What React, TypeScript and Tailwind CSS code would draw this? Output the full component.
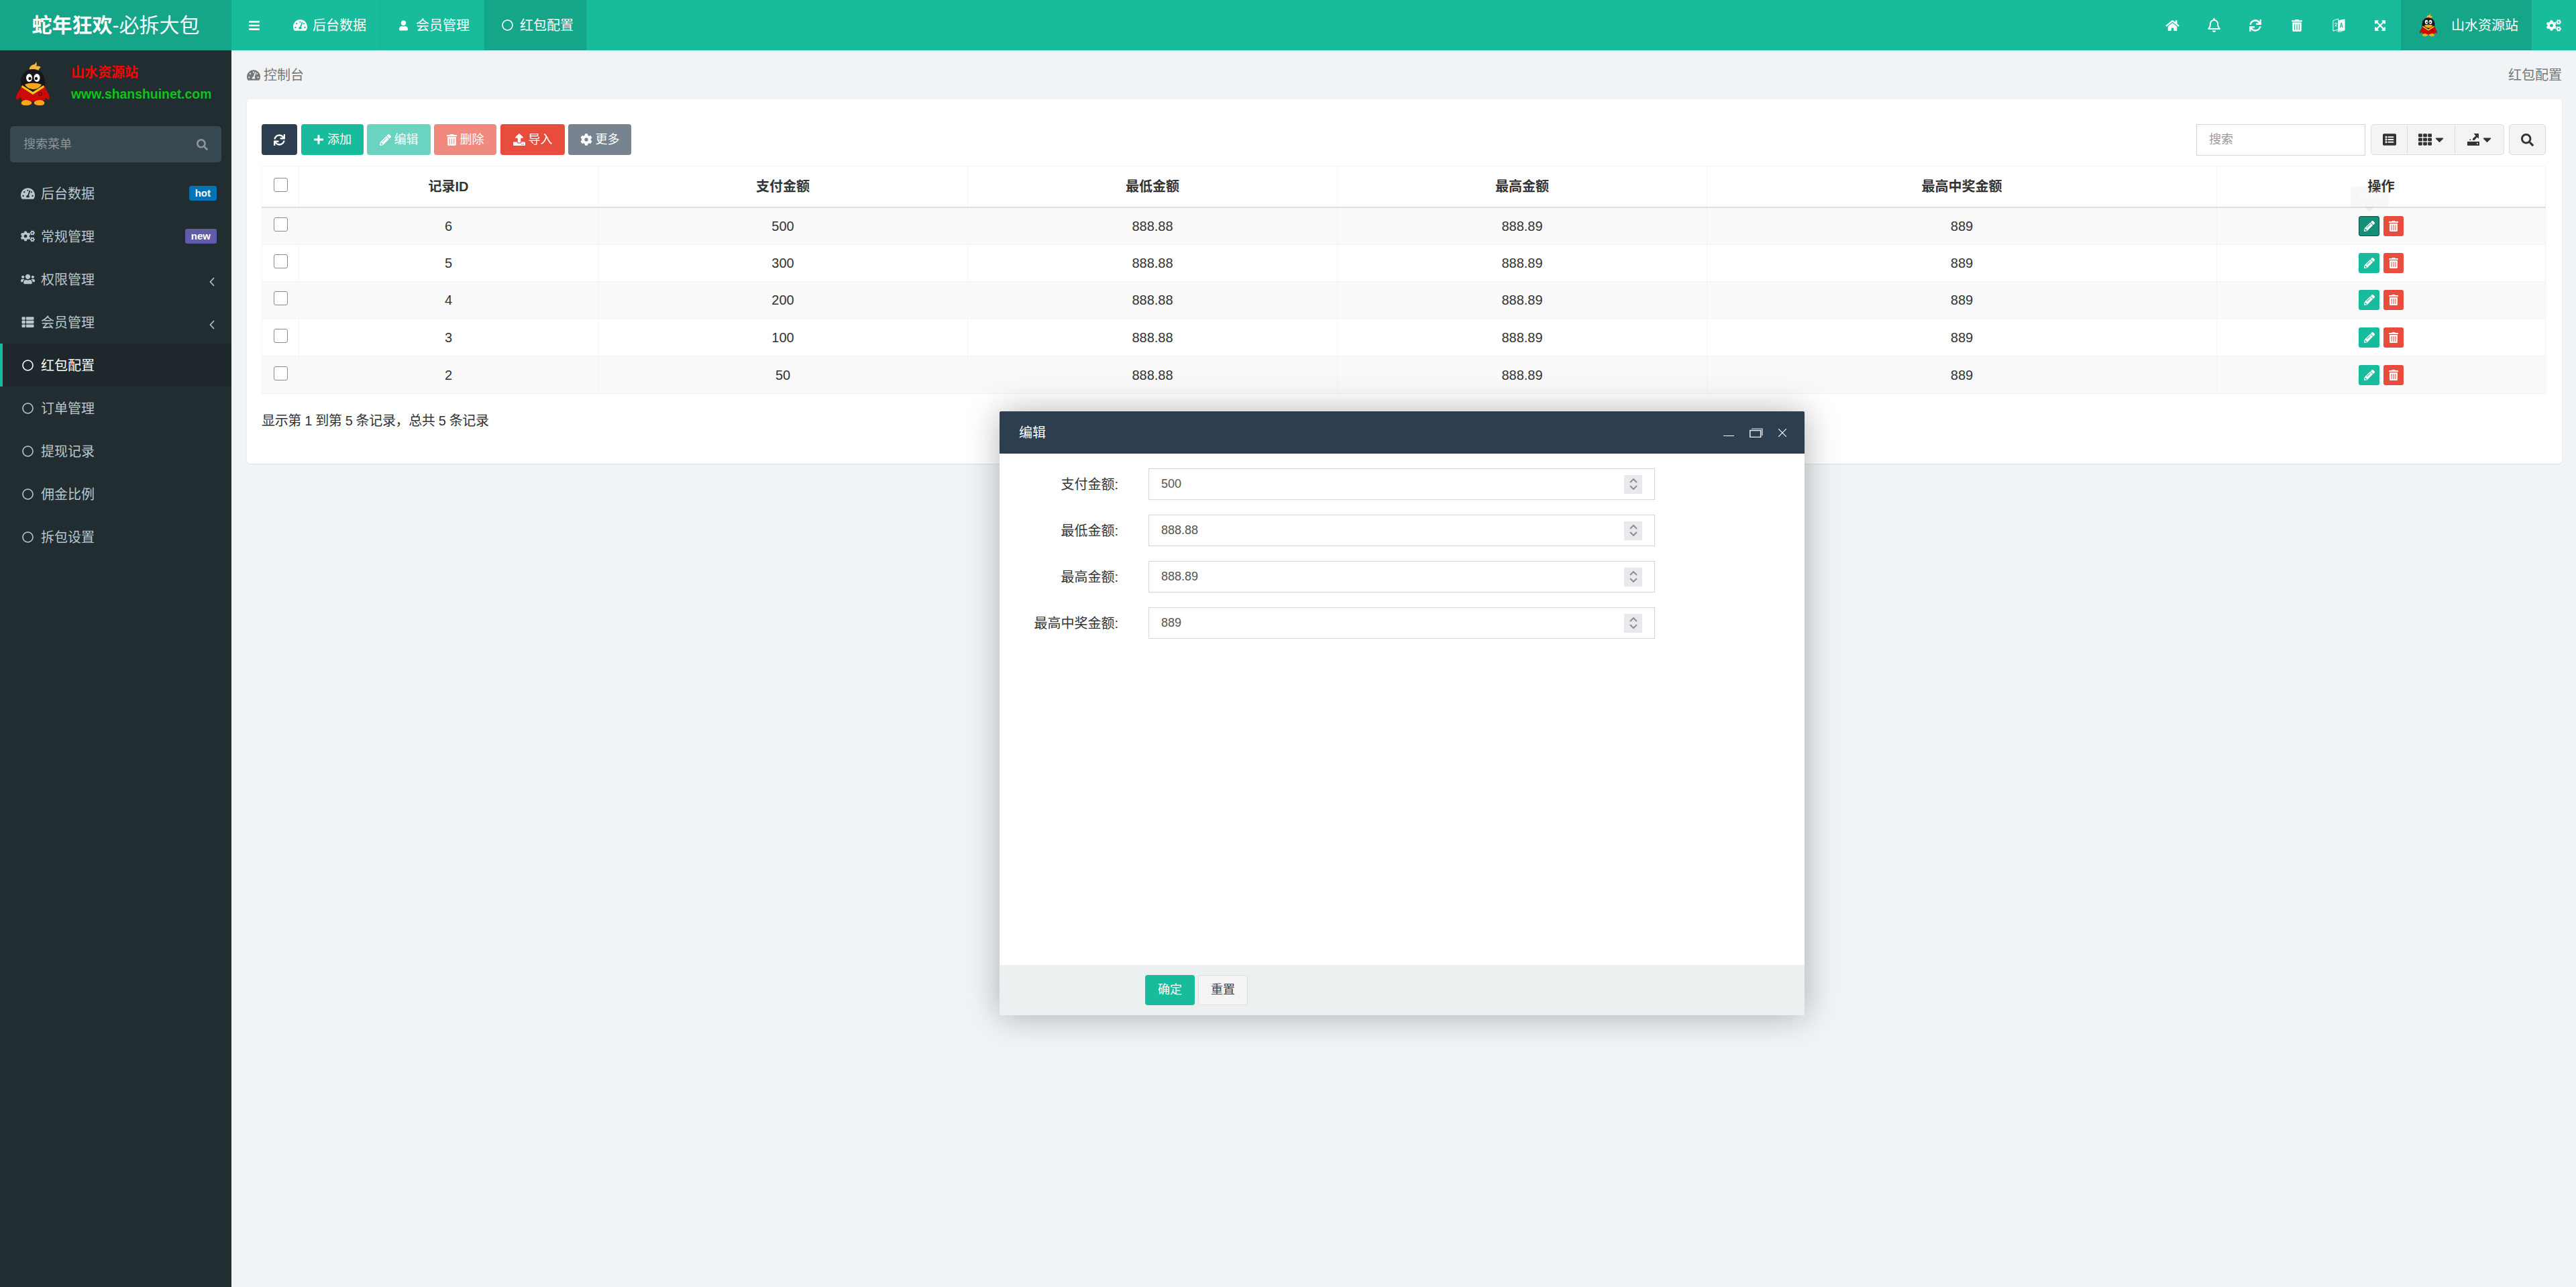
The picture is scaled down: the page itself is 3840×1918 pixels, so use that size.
import type { ReactNode } from 'react';
import {
  FaBars,
  FaCog,
  FaCogs,
  FaHome,
  FaListAlt,
  FaPencilAlt,
  FaPlus,
  FaRegBell,
  FaRegCircle,
  FaSearch,
  FaSync,
  FaTachometerAlt,
  FaTh,
  FaThList,
  FaTrashAlt,
  FaUpload,
  FaUser,
  FaUsers,
  FaExpandArrowsAlt,
  FaCaretDown,
} from 'react-icons/fa';

const rows = [
  { id: 6, pay: 500 },
  { id: 5, pay: 300 },
  { id: 4, pay: 200 },
  { id: 3, pay: 100 },
  { id: 2, pay: 50 },
];

const fields = [
  { label: '支付金额:', value: '500' },
  { label: '最低金额:', value: '888.88' },
  { label: '最高金额:', value: '888.89' },
  { label: '最高中奖金额:', value: '889' },
];

const menu = [
  { name: '后台数据', icon: <FaTachometerAlt className="w-[21px] h-[19px]" />, badge: 'hot' },
  { name: '常规管理', icon: <FaCogs className="w-[21px] h-[20px]" />, badge: 'new' },
  { name: '权限管理', icon: <FaUsers className="w-[21px] h-[20px]" />, arrow: true },
  { name: '会员管理', icon: <FaThList className="w-[21px] h-[18px]" />, arrow: true },
  { name: '红包配置', icon: <FaRegCircle className="w-[17px] h-[17px] mx-[2px]" />, active: true },
  { name: '订单管理', icon: <FaRegCircle className="w-[17px] h-[17px] mx-[2px]" /> },
  { name: '提现记录', icon: <FaRegCircle className="w-[17px] h-[17px] mx-[2px]" /> },
  { name: '佣金比例', icon: <FaRegCircle className="w-[17px] h-[17px] mx-[2px]" /> },
  { name: '拆包设置', icon: <FaRegCircle className="w-[17px] h-[17px] mx-[2px]" /> },
];

function Penguin({ className }: { className: string }) {
  return (
    <svg viewBox="0 0 50 66" className={className}>
      <path d="M22 16C17 11 21 5 27 4c1 0 2-2 3-4 1 3 1 5 0 7 3-1 5 0 7 1-2 1-3 3-4 6-1 3-7 4-11 2z" fill="#f5b83d" />
      <ellipse cx="25" cy="29" rx="18" ry="18" fill="#17171a" />
      <path d="M7 30h36v14H7z" fill="#17171a" />
      <ellipse cx="19.5" cy="24" rx="4.5" ry="6" fill="#fff" />
      <ellipse cx="31" cy="24" rx="4.5" ry="6" fill="#fff" />
      <circle cx="20.5" cy="25" r="2.2" fill="#111" />
      <circle cx="30" cy="25" r="2.2" fill="#111" />
      <path d="M13 34c6-3 18-3 25 0-3 5-8 7-12 7-5 0-10-2-13-7z" fill="#f6a81c" />
      <path d="M7 36l18 11 18-11 3 12-3 9c-6 3-29 3-35 0l-2-10z" fill="#cc0a06" />
      <path d="M9 35l16 10 16-10 1 3-17 11L8 38z" fill="#f6c21c" />
      <path d="M7 40C3 44 0 50 0 54c0 2 2 3 3 2l5-4zM43 40c4 4 7 10 7 14 0 2-2 3-3 2l-5-4z" fill="#cc0a06" />
      <path d="M8 60c3-4 10-4 15 0 1 3-2 5-9 5-5 0-7-2-6-5zM27 60c5-4 12-4 15 0 1 3-1 5-6 5-7 0-10-2-9-5z" fill="#f6a81c" />
      <circle cx="36" cy="48" r="2.4" fill="none" stroke="#6e0806" strokeWidth="1.2" />
    </svg>
  );
}

function TranslateIcon() {
  return (
    <svg viewBox="0 0 20 22" className="w-[19px] h-[21px]" fill="none" stroke="#fff" strokeWidth="1">
      <path d="M1 4l8-3v17l-8 2z" />
      <path d="M9 4l10-2v17l-10 1z" fill="#fff" />
      <path d="M3 8h4M5 7v1M3.5 13c2-1 3-3 3.5-5M4 10c1 1.500 2 2.500 3 3" strokeWidth="0.9" />
      <path d="M12 15l2-8 2 8M12.800 12.500h2.400" stroke="#18bc9c" strokeWidth="1.200" />
      <path d="M7 20c2 2 6 2 9 0" strokeWidth="0.9" />
    </svg>
  );
}

function ExportIcon() {
  return (
    <svg viewBox="0 0 18 18" className="w-[18px] h-[18px]" fill="#333">
      <path d="M0 12h18v6H0z" />
      <path d="M9.500 0H17v7.500l-2.500-2-4 4.500H8v-2.500l4.500-4z" />
      <path d="M4 8l2 2H3z" />
      <circle cx="15" cy="15" r="1" fill="#f4f4f4" />
    </svg>
  );
}

function ToolbarButton({ className, children }: { className: string; children: ReactNode }) {
  return (
    <button className={`h-[46px] flex items-center justify-center gap-[5px] rounded-[4px] text-white text-[18px] ${className}`}>
      {children}
    </button>
  );
}

function NavItem({ icon, name, className = '' }: { icon: ReactNode; name: string; className?: string }) {
  return (
    <div className={`h-full flex items-center gap-[8px] border-r border-[#17b394] text-white text-[20px] ${className}`}>
      {icon}
      <span>{name}</span>
    </div>
  );
}

function TopIcon({ children }: { children: ReactNode }) {
  return <div className="w-[62px] h-full flex items-center justify-center text-white">{children}</div>;
}

function Sidebar() {
  return (
    <aside className="w-[345px] shrink-0 bg-[#222d32] flex flex-col">
      <div className="h-[113px] flex pl-[24px] pt-[17px]">
        <Penguin className="w-[50px] h-[66px]" />
        <div className="ml-[32px] flex flex-col font-bold text-[20px]">
          <span className="text-[#ff0000] leading-[32px]">山水资源站</span>
          <span className="text-[#0fc21c] leading-[32px] text-[19.4px]">www.shanshuinet.com</span>
        </div>
      </div>
      <div className="mx-[15px] h-[54px] rounded-[5px] bg-[#374850] flex items-center justify-between pl-[20px] pr-[20px] text-[#8e9598] text-[18px]">
        <span>搜索菜单</span>
        <FaSearch className="w-[17px] h-[17px]" />
      </div>
      <nav className="mt-[14px] flex flex-col">
        {menu.map((item) => (
          <div
            key={item.name}
            className={`h-[64px] flex items-center text-[20px] border-l-[4px] pl-[27px] pr-[22px] ${
              item.active ? 'bg-[#1e282c] border-[#18bc9c] text-white' : 'border-transparent text-[#b8c7ce]'
            }`}
          >
            {item.icon}
            <span className="ml-[9px] relative top-[1px]">{item.name}</span>
            {item.badge && (
              <span
                className={`ml-auto h-[22px] px-[9px] rounded-[3px] flex items-center text-white text-[15px] font-bold ${
                  item.badge === 'hot' ? 'bg-[#0073b7]' : 'bg-[#605ca8]'
                }`}
              >
                {item.badge}
              </span>
            )}
            {item.arrow && (
              <svg viewBox="0 0 8 14" className="ml-auto mt-[8px] mr-[3px] w-[8px] h-[14px]" fill="none" stroke="#b8c7ce" strokeWidth="1.6">
                <path d="M7 1L1.500 7 7 13" />
              </svg>
            )}
          </div>
        ))}
      </nav>
    </aside>
  );
}

function DataTable() {
  const widths = [
    { id: 'check', w: 'w-[55px]' },
    { id: 'record', w: 'w-[446px]' },
    { id: 'pay', w: 'w-[551px]' },
    { id: 'low', w: 'w-[551px]' },
    { id: 'high', w: 'w-[551px]' },
    { id: 'prize', w: 'w-[760px]' },
    { id: 'ops', w: 'w-[490px]' },
  ];
  const heads = ['记录ID', '支付金额', '最低金额', '最高金额', '最高中奖金额', '操作'];
  return (
    <table className="w-[3404px] table-fixed border-collapse text-[20px] text-[#333]">
      <colgroup>
        {widths.map((c) => (
          <col key={c.id} className={c.w} />
        ))}
      </colgroup>
      <thead>
        <tr className="h-[61px] border border-[#f4f4f4] border-b-2 border-b-[#ddd]">
          <th className="border-r border-[#f4f4f4] text-center">
            <input type="checkbox" className="appearance-none block mx-auto mb-[5px] w-[21px] h-[21px] border border-[#8a8a8f] rounded-[3px] bg-white" />
          </th>
          {heads.map((h) => (
            <th key={h} className="border-r border-[#f4f4f4] text-center font-bold">
              {h}
            </th>
          ))}
        </tr>
      </thead>
      <tbody>
        {rows.map((r, i) => (
          <tr key={r.id} className={`h-[55.6px] border border-[#f4f4f4] ${i % 2 === 0 ? 'bg-[#f9f9f9]' : 'bg-white'}`}>
            <td className="border-r border-[#f4f4f4]">
              <input type="checkbox" className="appearance-none block mx-auto mb-[5px] w-[21px] h-[21px] border border-[#8a8a8f] rounded-[3px] bg-white" />
            </td>
            <td className="border-r border-[#f4f4f4] text-center">{r.id}</td>
            <td className="border-r border-[#f4f4f4] text-center">{r.pay}</td>
            <td className="border-r border-[#f4f4f4] text-center">888.88</td>
            <td className="border-r border-[#f4f4f4] text-center">888.89</td>
            <td className="border-r border-[#f4f4f4] text-center">889</td>
            <td className="border-r border-[#f4f4f4]">
              <div className="flex justify-center gap-[6px]">
                <span
                  className={`relative w-[31px] h-[30px] rounded-[3px] flex items-center justify-center text-white ${
                    i === 0 ? 'bg-[#128f76] border border-[#0a5445]' : 'bg-[#18bc9c]'
                  }`}
                >
                  <FaPencilAlt className="w-[16px] h-[16px]" />
                  {i === 0 && (
                    <span className="absolute left-[-13px] top-[-45px] w-[57px] h-[30px] rounded-[4px] bg-[#000]/[0.03] flex items-center justify-center text-[18px] text-white/50">
                      编辑
                    </span>
                  )}
                  {i === 0 && (
                    <span className="absolute left-[8px] top-[-15px] border-x-[7px] border-x-transparent border-t-[8px] border-t-[#000]/[0.04]" />
                  )}
                </span>
                <span className="w-[30px] h-[30px] rounded-[3px] bg-[#e74c3c] flex items-center justify-center text-white">
                  <FaTrashAlt className="w-[14px] h-[16px]" />
                </span>
              </div>
            </td>
          </tr>
        ))}
      </tbody>
    </table>
  );
}

function EditModal() {
  return (
    <div className="absolute left-[1490px] top-[613px] w-[1200px] h-[900px] flex flex-col bg-white rounded-t-[2px] shadow-[1px_1px_50px_rgba(0,0,0,0.3)]">
      <div className="h-[63px] shrink-0 bg-[#2c3e50] rounded-t-[2px] flex items-center pl-[29px] pr-[27px] text-white text-[20px]">
        <span>编辑</span>
        <div className="ml-auto flex items-center gap-[23px]">
          <svg viewBox="0 0 16 16" className="w-[16px] h-[16px]" fill="none" stroke="#fff">
            <path d="M0 12.500h16" />
          </svg>
          <svg viewBox="0 0 20 14" className="w-[20px] h-[14px]" fill="none" stroke="#e8ebee" strokeWidth="1.200">
            <path d="M.700 3.500h16v10h-16z" strokeWidth="1.600" />
            <path d="M3 1h16v10" />
          </svg>
          <svg viewBox="0 0 12 12" className="w-[12px] h-[12px]" fill="none" stroke="#fff" strokeWidth="1.100">
            <path d="M0 0l12 12M12 0L0 12" />
          </svg>
        </div>
      </div>
      <div className="flex-1 pt-[22px] flex flex-col gap-[22px]">
        {fields.map((f) => (
          <div key={f.label} className="flex items-center">
            <label className="w-[177px] text-right text-[20px] text-[#333]">{f.label}</label>
            <div className="ml-[45px] w-[755px] h-[47px] border border-[#d2d6de] flex items-center pl-[18px] pr-[18px]">
              <input defaultValue={f.value} className="flex-1 outline-none text-[18px] text-[#555]" />
              <div className="w-[27px] h-[28px] bg-[#e9e9ed] flex flex-col items-center justify-center gap-[3px]">
                <svg viewBox="0 0 12 7" className="w-[12px] h-[7px]" fill="none" stroke="#8d8d98" strokeWidth="2">
                  <path d="M1 6l5-5 5 5" />
                </svg>
                <svg viewBox="0 0 12 7" className="w-[12px] h-[7px]" fill="none" stroke="#8d8d98" strokeWidth="2">
                  <path d="M1 1l5 5 5-5" />
                </svg>
              </div>
            </div>
          </div>
        ))}
      </div>
      <div className="h-[75px] shrink-0 bg-[#ecf0f1] flex items-center pl-[217px] gap-[5px] text-[18px]">
        <button className="w-[74px] h-[45px] rounded-[4px] bg-[#18bc9c] text-white">确定</button>
        <button className="w-[74px] h-[45px] rounded-[4px] bg-[#f4f4f4] border border-[#ddd] text-[#444]">重置</button>
      </div>
    </div>
  );
}

export default function App() {
  return (
    <div className="relative w-[3840px] h-[1918px] flex flex-col overflow-hidden bg-[#f1f4f6] font-['Liberation_Sans','Noto_Sans_CJK_SC',sans-serif]">
      <header className="h-[75px] shrink-0 flex bg-[#18bc9c] shadow-[0_1px_4px_rgba(0,0,0,0.05)]">
        <div className="w-[345px] shrink-0 bg-[#15a689] flex items-center justify-center text-white text-[30px]">
          <b>蛇年狂欢</b>
          <span>-必拆大包</span>
        </div>
        <div className="w-[67px] flex items-center pl-[25px] text-white">
          <FaBars className="w-[18px] h-[18px]" />
        </div>
        <NavItem className="w-[155px] pl-[25px]" icon={<FaTachometerAlt className="w-[21px] h-[19px]" />} name="后台数据" />
        <NavItem className="w-[155px] pl-[28px] gap-[12px]" icon={<FaUser className="w-[13px] h-[18px]" />} name="会员管理" />
        <NavItem className="w-[153px] pl-[26px] bg-[#15a689] gap-[10px]" icon={<FaRegCircle className="w-[17px] h-[17px]" />} name="红包配置" />
        <div className="ml-auto flex h-full">
          <TopIcon><FaHome className="w-[21px] h-[18px]" /></TopIcon>
          <TopIcon><FaRegBell className="w-[19px] h-[21px]" /></TopIcon>
          <TopIcon><FaSync className="w-[18px] h-[18px]" /></TopIcon>
          <TopIcon><FaTrashAlt className="w-[16px] h-[18px]" /></TopIcon>
          <TopIcon><TranslateIcon /></TopIcon>
          <TopIcon><FaExpandArrowsAlt className="w-[18px] h-[18px]" /></TopIcon>
          <div className="w-[195px] h-full bg-[#15a689] flex items-center pl-[28px] text-white text-[20px]">
            <Penguin className="w-[26px] h-[35px]" />
            <span className="ml-[21px]">山水资源站</span>
          </div>
          <div className="w-[66px] h-full flex items-center pl-[22px] text-white">
            <FaCogs className="w-[22px] h-[20px]" />
          </div>
        </div>
      </header>
      <div className="flex-1 flex min-h-0">
        <Sidebar />
        <main className="flex-1 pl-[23px] pr-[22px]">
          <div className="h-[73px] flex items-center justify-between text-[20px] text-[#777]">
            <div className="flex items-center gap-[5px]">
              <FaTachometerAlt className="w-[20px] h-[18px]" />
              <span>控制台</span>
            </div>
            <span>红包配置</span>
          </div>
          <section className="h-[543px] bg-white rounded-[5px] shadow-[0_1px_2px_rgba(0,0,0,0.08)] pt-[37px] pl-[22px] pr-[24px]">
            <div className="h-[46px] flex items-center gap-[5px]">
              <ToolbarButton className="w-[53px] bg-[#2c3e50]"><FaSync className="w-[17px] h-[17px]" /></ToolbarButton>
              <ToolbarButton className="ml-px w-[93px] bg-[#18bc9c]"><FaPlus className="w-[16px] h-[16px]" />添加</ToolbarButton>
              <ToolbarButton className="w-[95px] bg-[#6ad4c0]"><FaPencilAlt className="w-[17px] h-[17px]" />编辑</ToolbarButton>
              <ToolbarButton className="w-[93px] bg-[#f0897e]"><FaTrashAlt className="w-[15px] h-[17px]" />删除</ToolbarButton>
              <ToolbarButton className="ml-px w-[96px] bg-[#e74c3c]"><FaUpload className="w-[18px] h-[18px]" />导入</ToolbarButton>
              <ToolbarButton className="w-[94px] bg-[#77838f]"><FaCog className="w-[18px] h-[18px]" />更多</ToolbarButton>
              <input placeholder="搜索" className="ml-auto self-start w-[252px] h-[47px] border border-[#d2d6de] pl-[18px] text-[18px] outline-none placeholder:text-[#999]" />
              <div className="ml-[3px] h-[46px] w-[199px] flex rounded-[5px] border border-[#ddd] bg-[#f4f4f4] text-[#333]">
                <span className="w-[54px] flex items-center justify-center border-r border-[#ddd]"><FaListAlt className="w-[20px] h-[20px]" /></span>
                <span className="w-[71px] flex items-center justify-center gap-[5px] border-r border-[#ddd]"><FaTh className="w-[20px] h-[20px]" /><FaCaretDown className="w-[13px] h-[20px]" /></span>
                <span className="flex-1 flex items-center justify-center gap-[5px]"><ExportIcon /><FaCaretDown className="w-[13px] h-[20px]" /></span>
              </div>
              <button className="ml-[2px] w-[55px] h-[46px] flex items-center justify-center rounded-[5px] border border-[#ddd] bg-[#f4f4f4] text-[#333]">
                <FaSearch className="w-[19px] h-[19px]" />
              </button>
            </div>
            <div className="mt-[16px]">
              <DataTable />
            </div>
            <p className="mt-[28px] text-[20px] leading-[24px] tracking-[-0.35px] text-[#333]">显示第 1 到第 5 条记录，总共 5 条记录</p>
          </section>
        </main>
      </div>
      <EditModal />
    </div>
  );
}
